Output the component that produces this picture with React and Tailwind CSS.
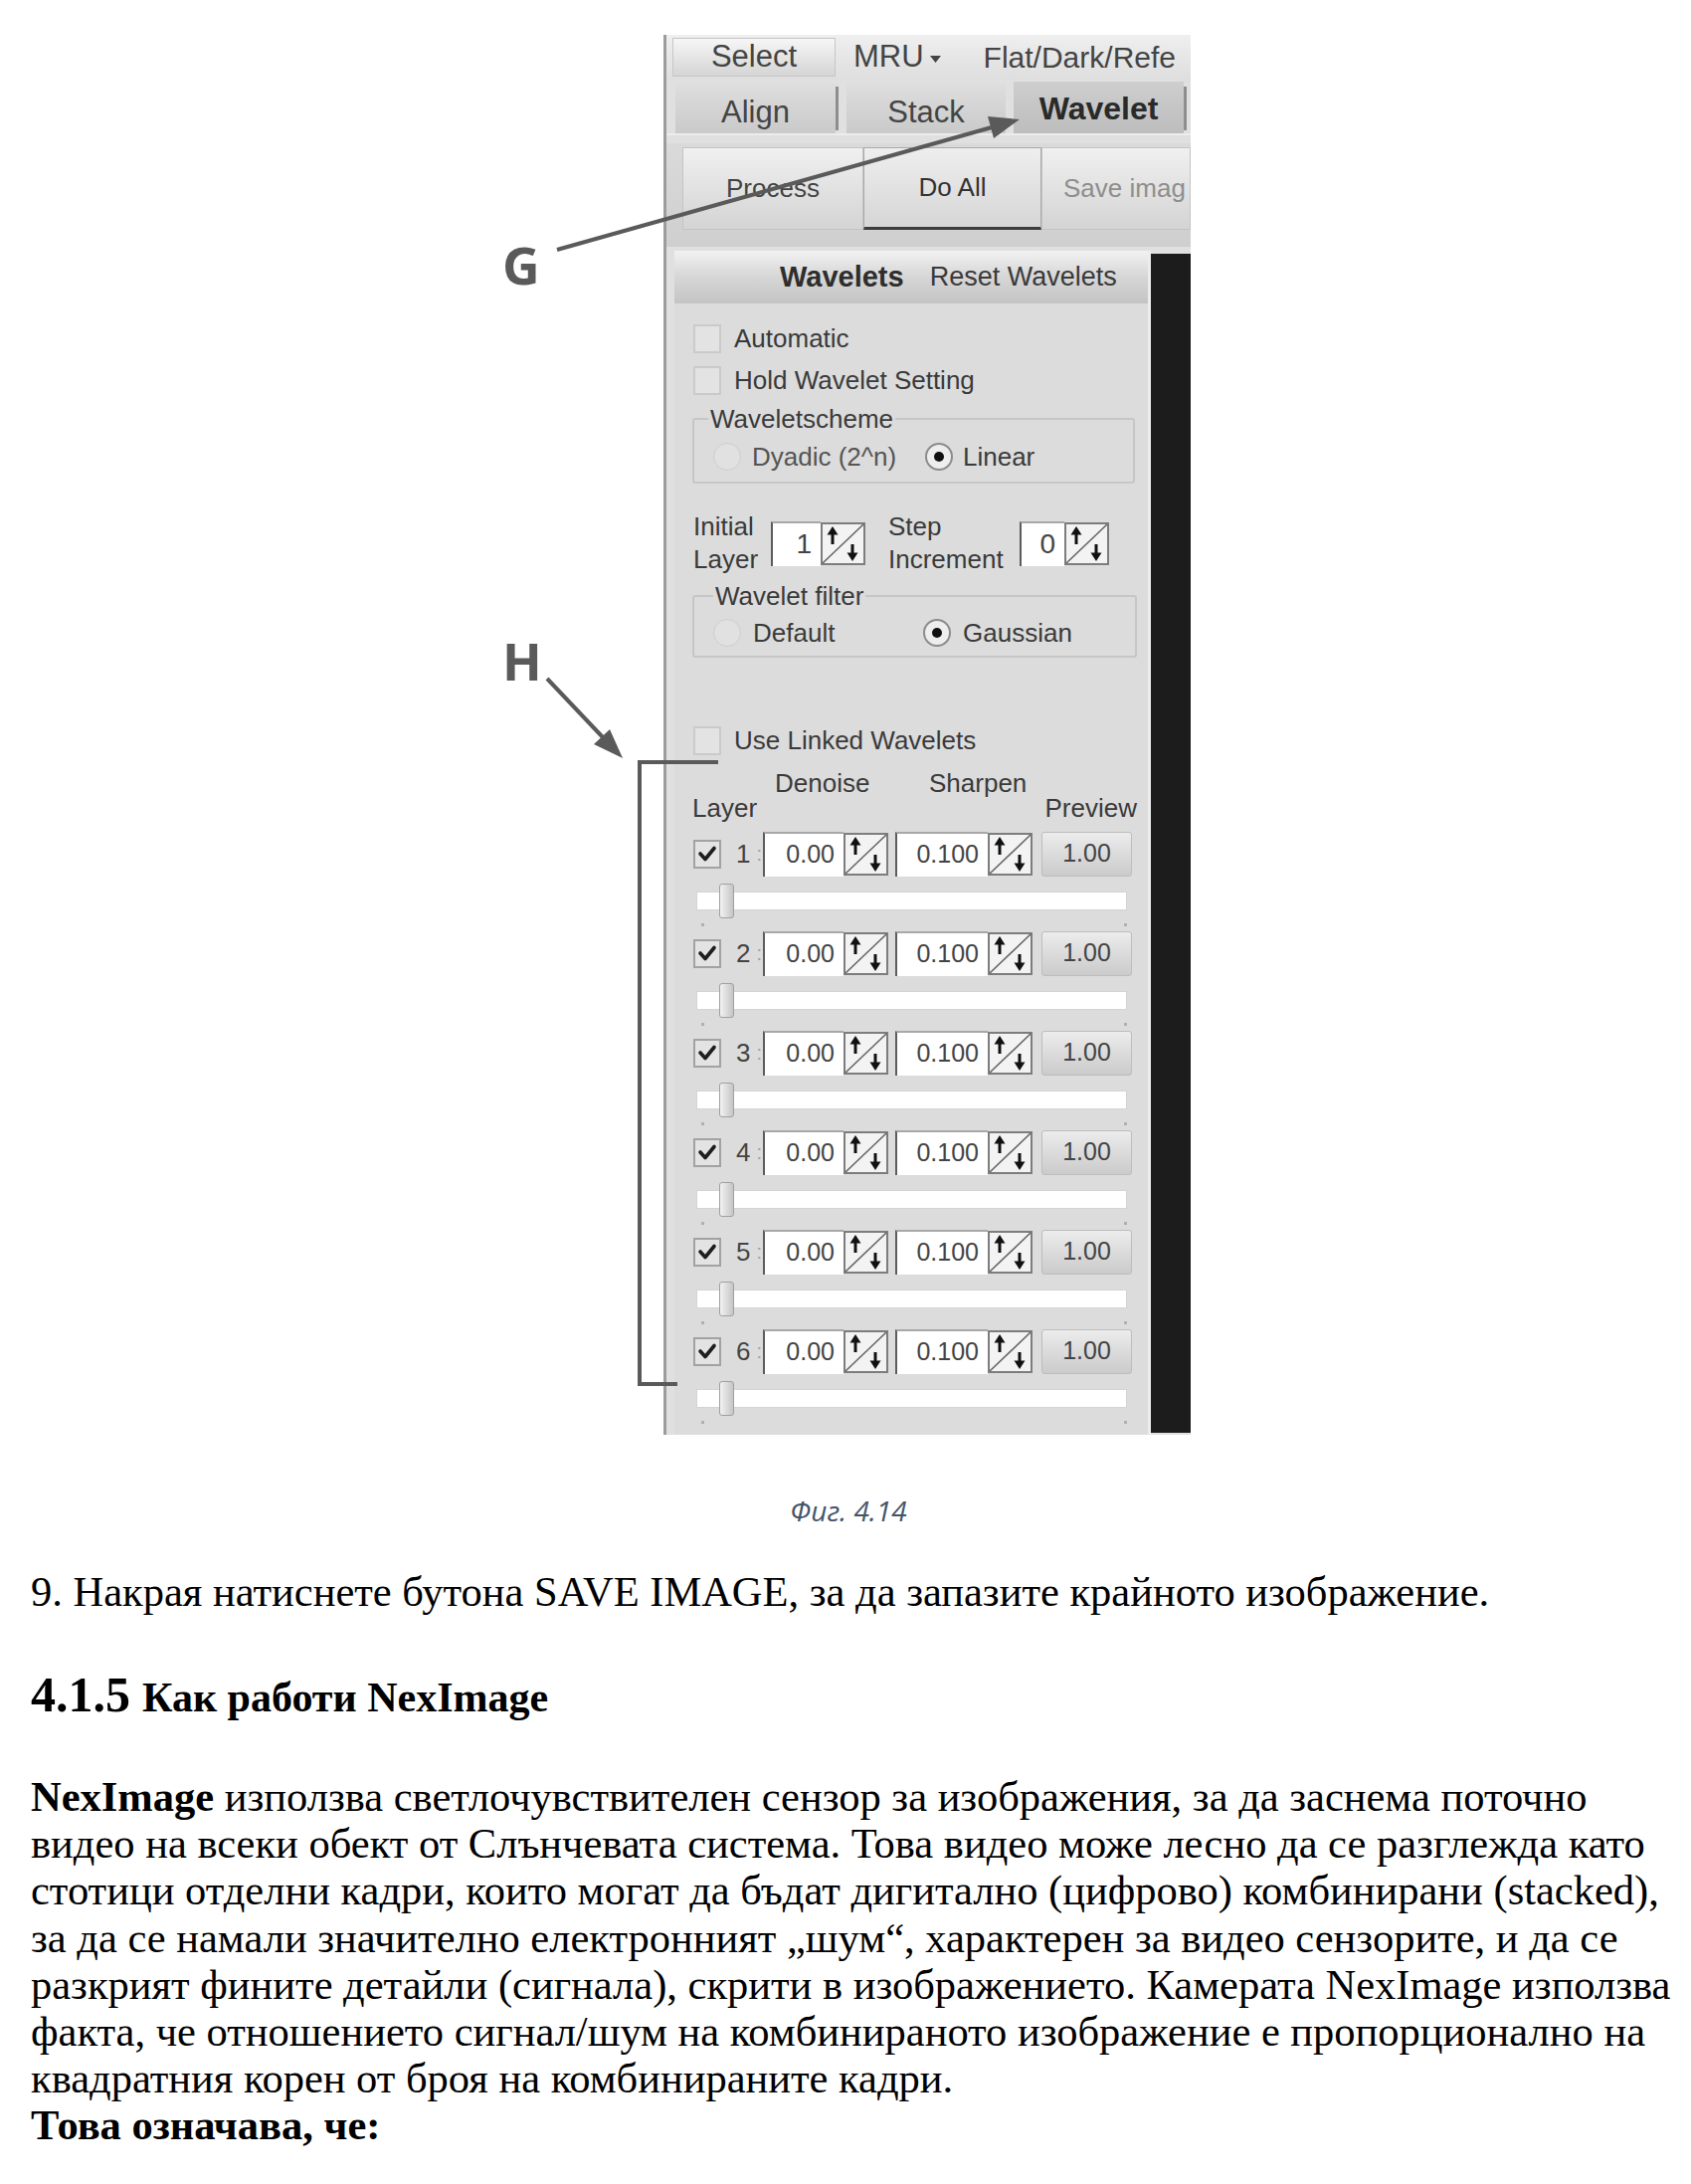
import React from 'react';

const ui = "font-['Liberation_Sans',Arial,sans-serif]";

function SpinArrows({ w = 45, h = 43 }) {
    return (
        <svg width={w} height={h} viewBox="0 0 45 43" preserveAspectRatio="none" className="block shrink-0">
            <rect x="1" y="1" width="43" height="41" fill="#f3f3f3" stroke="#7d7d7d" strokeWidth="2" />
            <line x1="2" y1="41" x2="43" y2="2" stroke="#666" strokeWidth="1.6" />
            <line x1="12" y1="11" x2="12" y2="22" stroke="#111" strokeWidth="3" />
            <polygon points="12,4 6.5,12.5 17.5,12.5" fill="#111" />
            <line x1="32" y1="22" x2="32" y2="32" stroke="#111" strokeWidth="3" />
            <polygon points="32,39 26.5,30.5 37.5,30.5" fill="#111" />
        </svg>
    );
}

function Check({ checked }) {
    return (
        <div
            className={
                'w-[28px] h-[29px] shrink-0 flex items-center justify-center bg-[#e3e3e3] border-2 ' +
                (checked ? 'border-[#a2a2a2]' : 'border-[#cacaca]')
            }
        >
            {checked && (
                <svg width="20" height="18" viewBox="0 0 20 18">
                    <path d="M3 9 L8 14.5 L17 3.5" fill="none" stroke="#1e1e1e" strokeWidth="3.6" strokeLinecap="round" strokeLinejoin="round" />
                </svg>
            )}
        </div>
    );
}

function Radio({ on }) {
    if (on) {
        return (
            <div className="w-[28px] h-[28px] shrink-0 rounded-full border-2 border-[#8c8c8c] bg-[#eeeeee] flex items-center justify-center">
                <div className="w-[10px] h-[10px] rounded-full bg-[#111]" />
            </div>
        );
    }
    return <div className="w-[28px] h-[28px] shrink-0 rounded-full border border-[#cdcdcd] bg-[#e1e1e1]" />;
}

function SpinBox({ value, inputW, text = 'text-[25px]' }) {
    return (
        <div className="flex items-start">
            <div
                className={`h-[45px] bg-white border-l-2 border-l-[#5c5c5c] border-t-2 border-t-[#a8a8a8] flex items-center justify-end pr-[9px] text-[#444] ${text}`}
                style={{ width: inputW }}
            >
                {value}
            </div>
            <div className="pt-[1px]">
                <SpinArrows />
            </div>
        </div>
    );
}

function LayerRow({ n }) {
    return (
        <div className="h-[100px] shrink-0 flex flex-col">
            <div className="h-[46px] flex items-center">
                <Check checked />
                <div className="w-[42px] pl-[15px] flex items-center text-[26px] text-[#444]">
                    <span>{n}</span>
                    <span className="ml-[6px] text-[20px] text-[#a0a0a0]">:</span>
                </div>
                <SpinBox value="0.00" inputW={81} />
                <div className="w-[7px]" />
                <SpinBox value="0.100" inputW={93} />
                <div className="ml-[9px] w-[91px] h-[45px] rounded-[3px] border border-[#bdbdbd] bg-linear-to-b from-[#ececec] to-[#cbcbcb] flex items-center justify-center text-[25px] text-[#444]">
                    1.00
                </div>
            </div>
            <div className="relative mt-[7px] h-[35px] flex items-center">
                <div className="ml-[3px] w-[433px] h-[19px] bg-white border border-[#d4d4d4]" />
                <div className="absolute left-[26px] top-0 w-[15px] h-[35px] rounded-[3px] border border-[#a0a0a0] bg-linear-to-r from-[#f2f2f2] to-[#c6c6c6]" />
            </div>
            <div className="h-[12px] flex items-center justify-between w-[436px] pl-[8px]">
                <div className="w-[3px] h-[3px] bg-[#b0b0b0]" />
                <div className="w-[3px] h-[3px] bg-[#b0b0b0]" />
            </div>
        </div>
    );
}

function Annotations() {
    return (
        <>
            <svg className="absolute left-0 top-0 pointer-events-none" width="1700" height="1442">
                {/* G arrow */}
                <line x1="560" y1="251" x2="997" y2="128" stroke="#5a5a5a" strokeWidth="4" />
                <polygon points="1025,120 999,139 993,117" fill="#5a5a5a" />
                {/* H arrow */}
                <line x1="550" y1="682" x2="606" y2="741" stroke="#5a5a5a" strokeWidth="4" />
                <polygon points="626,762 597,748 613,733" fill="#5a5a5a" />
                {/* bracket */}
                <polyline points="722,766 643,766 643,1391 681,1391" fill="none" stroke="#5a5a5a" strokeWidth="4" />
            </svg>
            <span className="absolute left-[505px] top-[240px] font-['Open_Sans',sans-serif] font-bold text-[52px] leading-none text-[#5a5a5a]">
                G
            </span>
            <span className="absolute left-[505px] top-[638px] font-['Open_Sans',sans-serif] font-bold text-[52px] leading-none text-[#5a5a5a]">
                H
            </span>
        </>
    );
}

function RegistaxPanel() {
    return (
        <div className={`ml-[667px] w-[530px] h-[1407px] flex flex-col bg-[#e0e0e0] border-l-[3px] border-[#9c9c9c] overflow-hidden text-[#3a3a3a] ${ui}`}>
            {/* menu row */}
            <div className="h-[45px] shrink-0 flex items-center pl-[6px] bg-linear-to-b from-[#efefef] to-[#dedede] whitespace-nowrap">
                <div className="w-[164px] h-[39px] shrink-0 flex items-center justify-center border border-[#c6c6c6] bg-linear-to-b from-[#f6f6f6] to-[#d5d5d5] text-[31px] text-[#444]">
                    Select
                </div>
                <div className="ml-[18px] flex items-center text-[31px] text-[#444]">
                    MRU
                    <svg width="11" height="7" viewBox="0 0 11 7" className="ml-[6px] mt-[4px]">
                        <polygon points="0,0 11,0 5.5,7" fill="#444" />
                    </svg>
                </div>
                <div className="ml-[43px] text-[30px] text-[#444]">Flat/Dark/Refe</div>
            </div>

            {/* tabs */}
            <div className="mt-[4px] h-[52px] shrink-0 flex items-end pl-[9px] whitespace-nowrap border-b-2 border-[#ececec]">
                <div className="w-[161px] h-[50px] shrink-0 flex items-center justify-center pt-[8px] bg-linear-to-b from-[#dedede] to-[#cacaca] text-[31px] text-[#444]">
                    Align
                </div>
                <div className="w-[11px] h-[50px] shrink-0 flex justify-start">
                    <div className="w-[3px] h-[44px] mt-[3px] bg-[#8e8e8e]" />
                </div>
                <div className="w-[160px] h-[50px] shrink-0 flex items-center justify-center pt-[8px] bg-linear-to-b from-[#dedede] to-[#cacaca] text-[31px] text-[#444]">
                    Stack
                </div>
                <div className="w-[8px] shrink-0" />
                <div className="w-[171px] h-[52px] shrink-0 flex items-center justify-center pt-[2px] bg-linear-to-b from-[#cecece] to-[#bdbdbd] font-bold text-[32px] text-[#2a2a2a]">
                    Wavelet
                </div>
                <div className="w-[3px] h-[44px] mb-[3px] shrink-0 bg-[#8e8e8e]" />
            </div>

            {/* action buttons */}
            <div className="mt-[8px] h-[104px] shrink-0 flex items-start pt-[4px] pl-[16px] bg-linear-to-b from-[#dadada] to-[#cfcfcf] whitespace-nowrap">
                <div className="w-[182px] h-[83px] shrink-0 flex items-center justify-center border border-[#c4c4c4] bg-linear-to-b from-[#f0f0f0] to-[#d4d4d4] text-[26px] text-[#444]">
                    Process
                </div>
                <div className="w-[179px] h-[83px] shrink-0 flex items-center justify-center border border-[#a9a9a9] border-b-[3px] border-b-[#3c3c3c] bg-linear-to-b from-[#eeeeee] to-[#d6d6d6] text-[26px] text-[#333]">
                    Do All
                </div>
                <div className="w-[150px] h-[83px] shrink-0 flex items-center pl-[21px] border border-[#c4c4c4] bg-linear-to-b from-[#f0f0f0] to-[#d4d4d4] text-[26px] text-[#8e8e8e]">
                    Save imag
                </div>
            </div>

            {/* wavelets panel + dark image area */}
            <div className="mt-[4px] flex flex-1 min-h-0">
                <div className="ml-[8px] w-[479px] shrink-0 flex flex-col bg-[#dcdcdc] border-r-[3px] border-[#ececec]">
                    <div className="h-[53px] shrink-0 flex items-center pl-[106px] bg-linear-to-b from-[#f2f2f2] via-[#d6d6d6] to-[#c4c4c4] whitespace-nowrap">
                        <span className="font-bold text-[29px] text-[#2e2e2e]">Wavelets</span>
                        <span className="ml-[26px] text-[27px] text-[#3a3a3a]">Reset Wavelets</span>
                    </div>

                    <div className="pl-[19px] flex flex-col text-[26px] whitespace-nowrap">
                        <div className="mt-[21px] h-[28px] flex items-center">
                            <Check />
                            <span className="ml-[13px]">Automatic</span>
                        </div>
                        <div className="mt-[14px] h-[28px] flex items-center">
                            <Check />
                            <span className="ml-[13px]">Hold Wavelet Setting</span>
                        </div>

                        <fieldset className="mt-[12px] -ml-[1px] w-[445px] border-2 border-[#c6c6c6] rounded-[3px] pb-[10px]">
                            <legend className="ml-[14px] px-[2px] text-[26px] leading-[26px]">Waveletscheme</legend>
                            <div className="mt-[10px] h-[30px] flex items-center pl-[19px]">
                                <Radio />
                                <span className="ml-[11px] w-[174px] text-[#555]">Dyadic (2^n)</span>
                                <Radio on />
                                <span className="ml-[10px]">Linear</span>
                            </div>
                        </fieldset>

                        <div className="mt-[27px] h-[66px] flex items-center">
                            <div className="w-[78px] leading-[33px]">
                                Initial
                                <br />
                                Layer
                            </div>
                            <SpinBox value="1" inputW={50} text="text-[28px]" />
                            <div className="ml-[23px] w-[132px] leading-[33px]">
                                Step
                                <br />
                                Increment
                            </div>
                            <SpinBox value="0" inputW={45} text="text-[28px]" />
                        </div>

                        <fieldset className="mt-[7px] -ml-[1px] w-[447px] border-2 border-[#c6c6c6] rounded-[3px] pb-[8px]">
                            <legend className="ml-[19px] px-[2px] text-[26px] leading-[26px]">Wavelet filter</legend>
                            <div className="mt-[9px] h-[30px] flex items-center pl-[19px]">
                                <Radio />
                                <span className="ml-[12px] w-[171px]">Default</span>
                                <Radio on />
                                <span className="ml-[12px]">Gaussian</span>
                            </div>
                        </fieldset>

                        <div className="mt-[69px] h-[28px] flex items-center">
                            <Check />
                            <span className="ml-[13px]">Use Linked Wavelets</span>
                        </div>

                        <div className="mt-[16px] h-[26px] leading-[26px] flex">
                            <span className="ml-[82px] w-[155px]">Denoise</span>
                            <span>Sharpen</span>
                        </div>
                        <div className="-mt-[1px] -ml-[1px] w-[447px] h-[26px] leading-[26px] flex justify-between">
                            <span>Layer</span>
                            <span>Preview</span>
                        </div>

                        <div className="mt-[10px] flex flex-col">
                            {[1, 2, 3, 4, 5, 6].map((n) => (
                                <LayerRow key={n} n={n} />
                            ))}
                        </div>
                    </div>
                </div>
                <div className="mt-[3px] w-[40px] h-[1185px] shrink-0 bg-[#1c1c1c]" />
            </div>
        </div>
    );
}

const lines = [
    'видео на всеки обект от Слънчевата система. Това видео може лесно да се разглежда като',
    'стотици отделни кадри, които могат да бъдат дигитално (цифрово) комбинирани (stacked),',
    'за да се намали значително електронният „шум“, характерен за видео сензорите, и да се',
    'разкрият фините детайли (сигнала), скрити в изображението. Камерата NexImage използва',
    'факта, че отношението сигнал/шум на комбинираното изображение е пропорционално на',
    'квадратния корен от броя на комбинираните кадри.',
];

export default function App() {
    return (
        <div className="w-[1700px] h-[2195px] bg-white overflow-hidden">
            {/* Figure 4.14 */}
            <div className="relative h-[1442px] pt-[35px]">
                <RegistaxPanel />
                <Annotations />
            </div>

            <div className="mt-[60px] pl-[6px] text-center font-['Open_Sans',sans-serif] italic text-[28px] leading-[32px] text-[#44546a]">
                Фиг. 4.14
            </div>

            {/* Body text */}
            <div className="pl-[31px] font-['Liberation_Serif','Times_New_Roman',serif] text-black whitespace-nowrap">
                <p className="mt-[42px] text-[42.5px] leading-[47px]">
                    9. Накрая натиснете бутона SAVE IMAGE, за да запазите крайното изображение.
                </p>

                <h2 className="mt-[52px] h-[56px] flex items-baseline font-bold leading-[56px]">
                    <span className="text-[50px]">4.1.5</span>
                    <span className="ml-[12px] text-[42px]">Как работи NexImage</span>
                </h2>

                <div className="mt-[51px] text-[42.5px] leading-[47.2px]">
                    <div>
                        <b>NexImage</b> използва светлочувствителен сензор за изображения, за да заснема поточно
                    </div>
                    {lines.map((l) => (
                        <div key={l}>{l}</div>
                    ))}
                    <div className="font-bold">Това означава, че:</div>
                </div>
            </div>
        </div>
    );
}
